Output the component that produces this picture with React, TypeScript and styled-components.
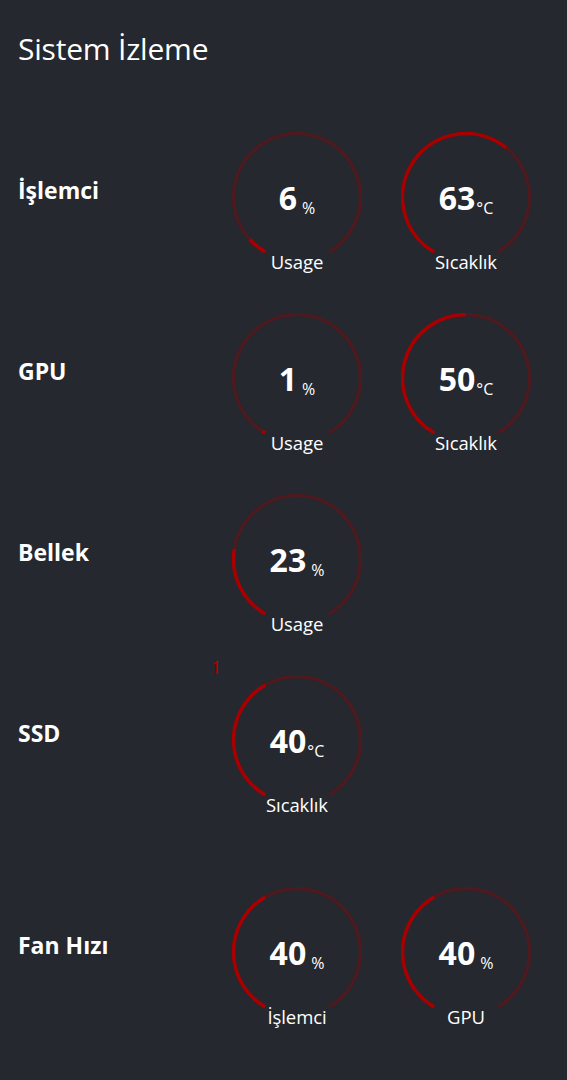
import React from "react";
import styled, { createGlobalStyle } from "styled-components";

const Global = createGlobalStyle`
  html, body { margin: 0; padding: 0; background: #25282e; }
  body { font-family: "Open Sans", "Noto Sans", sans-serif; color: #ffffff; }
`;

const Page = styled.div`
  width: 567px;
  min-height: 1080px;
  box-sizing: border-box;
  padding: 30px 0 0 18px;
  background: #25282e;
`;

const Title = styled.h1`
  margin: 0 0 64px 0;
  font-size: 30px;
  font-weight: 400;
  line-height: 38px;
  letter-spacing: -0.2px;
`;

const List = styled.div`
  display: flex;
  flex-direction: column;
`;

const Row = styled.section<{ $extra?: number }>`
  position: relative;
  display: grid;
  grid-template-columns: 214px auto;
  align-items: center;
  margin-bottom: ${(p) => 51 + (p.$extra ?? 0)}px;
`;

const Label = styled.h2`
  margin: 0;
  padding-bottom: 14px;
  font-size: 23px;
  font-weight: 700;
  line-height: 30px;
  letter-spacing: 0;
`;

const Gauges = styled.div`
  display: flex;
  gap: 39px;
`;

const GaugeBox = styled.div`
  position: relative;
  width: 130px;
  height: 130px;
`;

const Ring = styled.svg`
  display: block;
`;

const Value = styled.div`
  position: absolute;
  inset: 0;
  display: flex;
  align-items: center;
  justify-content: center;
  padding-top: 2px;
`;

const Num = styled.span`
  font-size: 32px;
  font-weight: 700;
  line-height: 1;
`;

const Unit = styled.span<{ $gap: number }>`
  font-size: 16px;
  font-weight: 400;
  margin-left: ${(p) => p.$gap}px;
  align-self: center;
  margin-top: 20px;
`;

const Caption = styled.div`
  position: absolute;
  left: 0;
  right: 0;
  bottom: -12px;
  text-align: center;
  font-size: 18.5px;
  line-height: 24px;
  letter-spacing: -0.1px;
`;

const Badge = styled.div`
  position: absolute;
  left: 193px;
  top: -19px;
  color: #b00000;
  font-size: 18px;
  font-weight: 400;
  line-height: 22px;
  z-index: 1;
`;

const R = 63.5;
const C = 65;

function pt(theta: number) {
  const t = (theta * Math.PI) / 180;
  return [C - R * Math.sin(t), C + R * Math.cos(t)];
}

function arc(from: number, to: number) {
  const [x1, y1] = pt(from);
  const [x2, y2] = pt(to);
  const large = to - from > 180 ? 1 : 0;
  return `M ${x1.toFixed(2)} ${y1.toFixed(2)} A ${R} ${R} 0 ${large} 1 ${x2.toFixed(2)} ${y2.toFixed(2)}`;
}

type GaugeProps = { value: number; unit: "%" | "°C"; caption: string };

function Gauge({ value, unit, caption }: GaugeProps) {
  const end = 30 + (300 * Math.max(value, 0.01)) / 100;
  return (
    <GaugeBox>
      <Ring width={130} height={130} viewBox="0 0 130 130">
        <path d={arc(30, 330)} fill="none" stroke="#4c1a1f" strokeWidth={3.5} />
        <path d={arc(30, end)} fill="none" stroke="#a80000" strokeWidth={3.5} />
      </Ring>
      <Value>
        <Num>{value}</Num>
        <Unit $gap={unit === "%" ? 5 : 1}>{unit === "%" ? "%" : "°C"}</Unit>
      </Value>
      <Caption>{caption}</Caption>
    </GaugeBox>
  );
}

export default function App() {
  return (
    <Page>
      <Global />
      <Title>Sistem İzleme</Title>
      <List>
        <Row>
          <Label>İşlemci</Label>
          <Gauges>
            <Gauge value={6} unit="%" caption="Usage" />
            <Gauge value={63} unit="°C" caption="Sıcaklık" />
          </Gauges>
        </Row>
        <Row>
          <Label>GPU</Label>
          <Gauges>
            <Gauge value={1} unit="%" caption="Usage" />
            <Gauge value={50} unit="°C" caption="Sıcaklık" />
          </Gauges>
        </Row>
        <Row>
          <Label>Bellek</Label>
          <Gauges>
            <Gauge value={23} unit="%" caption="Usage" />
          </Gauges>
        </Row>
        <Row $extra={31}>
          <Badge>1</Badge>
          <Label>SSD</Label>
          <Gauges>
            <Gauge value={40} unit="°C" caption="Sıcaklık" />
          </Gauges>
        </Row>
        <Row>
          <Label>Fan Hızı</Label>
          <Gauges>
            <Gauge value={40} unit="%" caption="İşlemci" />
            <Gauge value={40} unit="%" caption="GPU" />
          </Gauges>
        </Row>
      </List>
    </Page>
  );
}
